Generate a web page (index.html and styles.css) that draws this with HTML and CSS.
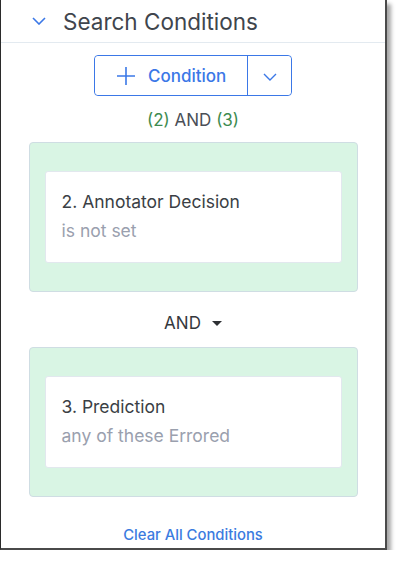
FILE: index.html
```html
<!DOCTYPE html>
<html lang="en">
<head>
    <meta charset="UTF-8">
    <meta name="viewport" content="width=device-width, initial-scale=1.0">
    <title>Search Conditions</title>
    <link rel="stylesheet" href="styles.css">
</head>
<body>
    <div class="panel">
        <div class="panel-header">
            <svg class="collapse-icon" width="14" height="8" viewBox="0 0 14 8">
                <path d="M1 1 L7 7 L13 1" fill="none" stroke="#3b78e7" stroke-width="1.6"/>
            </svg>
            <h2>Search Conditions</h2>
        </div>

        <div class="add-row">
            <div class="split-button">
                <button class="add-btn">
                    <svg width="20" height="20" viewBox="0 0 20 20">
                        <path d="M10 1 V19 M1 10 H19" stroke="#3b78e7" stroke-width="1.6"/>
                    </svg>
                    Condition
                </button>
                <button class="menu-btn">
                    <svg width="14" height="8" viewBox="0 0 14 8">
                        <path d="M1 1 L7 7 L13 1" fill="none" stroke="#3b78e7" stroke-width="1.4"/>
                    </svg>
                </button>
            </div>
        </div>

        <div class="expression">
            <span class="ref">(2)</span> AND <span class="ref">(3)</span>
        </div>

        <div class="group">
            <div class="condition">
                <div class="condition-title">2. Annotator Decision</div>
                <div class="condition-value">is not set</div>
            </div>
        </div>

        <div class="operator">
            AND <span class="caret"></span>
        </div>

        <div class="group">
            <div class="condition">
                <div class="condition-title">3. Prediction</div>
                <div class="condition-value">any of these Errored</div>
            </div>
        </div>

        <a class="clear-link" href="#">Clear All Conditions</a>
    </div>
</body>
</html>
```

FILE: styles.css
```css
body {
    margin: 0;
    font-family: Inter, Roboto, "Liberation Sans", Arial, sans-serif;
    background-color: #fff;
}
.panel {
    width: 384px;
    height: 548px;
    background-color: #fff;
    border-left: 1px solid #2b2b2b;
    border-right: 2px solid #4a4a4a;
    border-bottom: 2px solid #4a4a4a;
    box-shadow: 4px 4px 4px rgba(0, 0, 0, 0.35);
    display: flex;
    flex-direction: column;
    align-items: center;
}
.panel-header {
    align-self: stretch;
    height: 42px;
    display: flex;
    align-items: center;
    border-bottom: 1px solid #e3eaf0;
}
.collapse-icon {
    margin-left: 31px;
    margin-right: 17px;
}
.panel-header h2 {
    margin: 0;
    font-size: 22.5px;
    font-weight: 400;
    color: #3f454d;
}
.add-row {
    margin-top: 12px;
}
.split-button {
    display: flex;
    height: 41px;
    border: 1px solid #3b78e7;
    border-radius: 4px;
    box-sizing: border-box;
}
.split-button button {
    background: #fff;
    border: none;
    border-radius: 4px;
    color: #3b78e7;
    display: flex;
    align-items: center;
    cursor: pointer;
}
.add-btn {
    width: 153px;
    padding: 0 0 0 21px;
    font-family: inherit;
    font-size: 17px;
    font-weight: 500;
    gap: 12px;
    border-right: 1px solid #3b78e7 !important;
    border-radius: 4px 0 0 4px !important;
}
.menu-btn {
    width: 43px;
    justify-content: center;
    padding: 2px 0 0 0;
}
.expression {
    margin-top: 14px;
    font-size: 17px;
    color: #4a4f57;
}
.ref {
    color: #3d8b4f;
}
.group {
    margin-top: 12px;
    width: 329px;
    box-sizing: border-box;
    padding: 28px 15px 28px 15px;
    background-color: #d9f5e4;
    border: 1px solid #cfdde3;
    border-radius: 4px;
}
.condition {
    background-color: #fff;
    border: 1px solid #e2e8ee;
    border-radius: 3px;
    padding: 18px 16px 22px 16px;
    height: 92px;
    box-sizing: border-box;
}
.condition-title {
    font-size: 17.5px;
    line-height: 24px;
    color: #3b3f45;
}
.condition-value {
    margin-top: 6px;
    font-size: 17.5px;
    line-height: 22px;
    color: #9aa0ae;
}
.operator {
    margin-top: 21px;
    margin-bottom: 2px;
    font-size: 17px;
    color: #34383d;
    display: flex;
    align-items: center;
    gap: 11px;
}
.caret {
    width: 0;
    height: 0;
    border-left: 5px solid transparent;
    border-right: 5px solid transparent;
    border-top: 5px solid #2e3034;
}
.clear-link {
    margin-top: 29px;
    font-size: 14.8px;
    font-weight: 500;
    color: #3b7be0;
    text-decoration: none;
}
```
